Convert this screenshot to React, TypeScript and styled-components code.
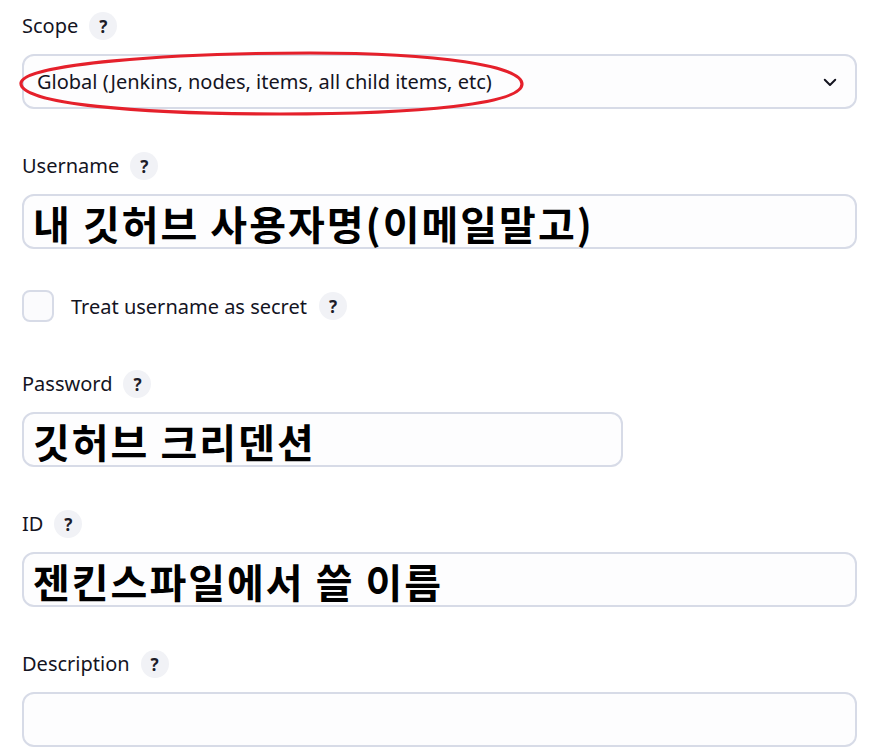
import React from "react";
import styled, { createGlobalStyle } from "styled-components";

const GlobalStyle = createGlobalStyle`
  body {
    margin: 0;
    background: #ffffff;
    font-family: "Noto Sans", "Noto Sans CJK KR", sans-serif;
    color: #14141f;
  }
`;

const Form = styled.div`
  display: flex;
  flex-direction: column;
  width: 835px;
  padding: 11px 0 0 22px;
`;

const Field = styled.div`
  display: flex;
  flex-direction: column;
  margin-bottom: 42px;
`;

const LabelRow = styled.div`
  display: flex;
  align-items: center;
  gap: 11px;
  height: 30px;
  margin-bottom: 13px;
`;

const Label = styled.span`
  font-size: 20px;
  line-height: 30px;
`;

const HelpButton = styled.span`
  display: inline-flex;
  align-items: center;
  justify-content: center;
  width: 28px;
  height: 28px;
  border-radius: 50%;
  background: #f1f2f6;
  font-size: 17px;
  font-weight: 700;
  color: #1c1c28;
`;

const Box = styled.div<{ $width?: number }>`
  position: relative;
  box-sizing: border-box;
  width: ${(p) => (p.$width ? `${p.$width}px` : "100%")};
  height: 55px;
  display: flex;
  align-items: center;
  border: 2px solid #d7dbe7;
  border-radius: 12px;
  background: #fdfdfe;
  padding: 0 9px;
`;

const SelectText = styled.span`
  flex: 1;
  font-size: 20px;
  padding-left: 4px;
`;

const BigValue = styled.span`
  font-family: "Noto Sans CJK KR", "Noto Sans", sans-serif;
  font-weight: 700;
  font-size: 40px;
  letter-spacing: 2px;
  line-height: 1;
  color: #000;
  margin-top: 2px;
`;

const Chevron = styled.svg`
  width: 18px;
  height: 18px;
  margin-right: 7px;
`;

const Annotation = styled.svg`
  position: absolute;
  left: -4px;
  top: -4px;
  width: 506px;
  height: 66px;
  overflow: visible;
  pointer-events: none;
`;

const CheckRow = styled.div`
  display: flex;
  align-items: center;
  height: 32px;
  margin-top: -1px;
  margin-bottom: 47px;
`;

const CheckBox = styled.span`
  box-sizing: border-box;
  width: 32px;
  height: 32px;
  border: 2px solid #d7dbe7;
  border-radius: 8px;
  background: #fbfbfd;
  margin-right: 17px;
`;

const CheckLabel = styled.span`
  font-size: 20px;
  margin-right: 12px;
`;

const Help = () => <HelpButton>?</HelpButton>;

export default function App() {
  return (
    <>
      <GlobalStyle />
      <Form>
        <Field>
          <LabelRow>
            <Label>Scope</Label>
            <Help />
          </LabelRow>
          <Box>
            <SelectText>Global (Jenkins, nodes, items, all child items, etc)</SelectText>
            <Chevron viewBox="0 0 24 24" fill="none" stroke="#14141f" strokeWidth="2.6" strokeLinecap="round" strokeLinejoin="round">
              <path d="M5 9l7 7 7-7" />
            </Chevron>
            {/* red hand-drawn highlight from the screenshot */}
            <Annotation viewBox="0 0 506 66">
              <path
                d="M1 31 C 3 12, 150 1, 290 1 C 420 1, 502 14, 502 32 C 502 52, 400 62, 260 62 C 120 62, -1 52, 1 31 Z"
                fill="none"
                stroke="#e5202b"
                strokeWidth="3.2"
              />
            </Annotation>
          </Box>
        </Field>

        <Field>
          <LabelRow>
            <Label>Username</Label>
            <Help />
          </LabelRow>
          <Box>
            <BigValue>내 깃허브 사용자명(이메일말고)</BigValue>
          </Box>
        </Field>

        <CheckRow>
          <CheckBox />
          <CheckLabel>Treat username as secret</CheckLabel>
          <Help />
        </CheckRow>

        <Field>
          <LabelRow>
            <Label>Password</Label>
            <Help />
          </LabelRow>
          <Box $width={601}>
            <BigValue>깃허브 크리덴션</BigValue>
          </Box>
        </Field>

        <Field>
          <LabelRow>
            <Label>ID</Label>
            <Help />
          </LabelRow>
          <Box>
            <BigValue>젠킨스파일에서 쓸 이름</BigValue>
          </Box>
        </Field>

        <Field>
          <LabelRow>
            <Label>Description</Label>
            <Help />
          </LabelRow>
          <Box />
        </Field>
      </Form>
    </>
  );
}
